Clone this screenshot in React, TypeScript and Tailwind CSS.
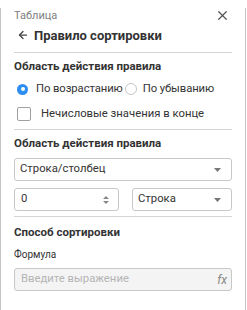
import { X, ArrowLeft } from 'lucide-react';

const Caret = () => (
  <svg width="7" height="4" viewBox="0 0 7 4" className="shrink-0">
    <path d="M0 0h7L3.5 4z" fill="#777" />
  </svg>
);

const Spinner = () => (
  <svg width="6" height="10" viewBox="0 0 6 10" className="shrink-0">
    <path d="M0 4h6L3 1z" fill="#888" />
    <path d="M0 6h6L3 9z" fill="#888" />
  </svg>
);

export default function App() {
  return (
    <div
      className="w-[246px] h-[309px] bg-white border-l border-r border-b border-[#c6c6c6] text-[#333] px-[13px]"
      style={{ fontFamily: 'Roboto, "Noto Sans", sans-serif' }}
    >
      {/* Header */}
      <div className="flex items-center justify-between h-[15px] mt-[8px]">
        <span className="text-[11px] text-[#808080] leading-none">Таблица</span>
        <X className="w-[15px] h-[15px] text-[#555] mr-[2px]" strokeWidth={2} />
      </div>
      <div className="flex items-center h-[20px] mt-[2px] pl-[3px] gap-[5px]">
        <ArrowLeft className="w-[12px] h-[12px] text-[#444]" strokeWidth={2.5} />
        <span className="text-[13px] font-bold text-[#333] leading-none">Правило сортировки</span>
      </div>
      <div className="border-t border-[#d4d4d4] mt-[7px]" />

      {/* Section 1 */}
      <div className="mt-[7px] h-[14px] flex items-center">
        <span className="text-[11.5px] font-bold leading-none">Область действия правила</span>
      </div>
      <div className="flex items-center h-[16px] mt-[7px] pl-[3px] text-[11.3px]">
        <span className="w-[11px] h-[11px] rounded-full bg-[#2d8ef0] flex items-center justify-center">
          <span className="w-[4px] h-[4px] rounded-full bg-white" />
        </span>
        <span className="ml-[8px] tracking-[-0.1px]">По возрастанию</span>
        <span className="w-[12px] h-[12px] rounded-full border border-[#c4c4c4] ml-[2px]" />
        <span className="ml-[6px] tracking-[-0.1px]">По убыванию</span>
      </div>
      <div className="flex items-center h-[16px] mt-[9px] pl-[3px] text-[11.3px]">
        <span className="w-[14px] h-[14px] rounded-[2px] border border-[#a0a0a0]" />
        <span className="ml-[10px]">Нечисловые значения в конце</span>
      </div>
      <div className="border-t border-[#d4d4d4] mt-[7px]" />

      {/* Section 2 */}
      <div className="mt-[7px] h-[14px] flex items-center">
        <span className="text-[11.5px] font-bold leading-none">Область действия правила</span>
      </div>
      <div className="mt-[7px] h-[23px] border border-[#c8c8c8] rounded-[3px] flex items-center justify-between pl-[5px] pr-[10px] text-[11.3px]">
        <span>Строка/столбец</span>
        <Caret />
      </div>
      <div className="mt-[7px] flex gap-[13px]">
        <div className="w-[105px] h-[23px] border border-[#c8c8c8] rounded-[3px] flex items-center justify-between pl-[6px] pr-[9px] text-[11.3px]">
          <span>0</span>
          <Spinner />
        </div>
        <div className="flex-1 h-[23px] border border-[#c8c8c8] rounded-[3px] flex items-center justify-between pl-[5px] pr-[10px] text-[11.3px]">
          <span>Строка</span>
          <Caret />
        </div>
      </div>
      <div className="border-t border-[#d4d4d4] mt-[5px]" />

      {/* Section 3 */}
      <div className="mt-[9px] h-[14px] flex items-center">
        <span className="text-[11.5px] font-bold leading-none">Способ сортировки</span>
      </div>
      <div className="mt-[9px] h-[12px] flex items-center">
        <span className="text-[10px] leading-none text-[#333]">Формула</span>
      </div>
      <div className="mt-[7px] h-[23px] border border-[#c8c8c8] rounded-[3px] bg-[#f4f4f4] flex items-center justify-between pl-[6px] pr-[4px] text-[11.3px]">
        <span className="text-[#b4b4b4]">Введите выражение</span>
        <span className="italic text-[#888] text-[12px]">fx</span>
      </div>
    </div>
  );
}
